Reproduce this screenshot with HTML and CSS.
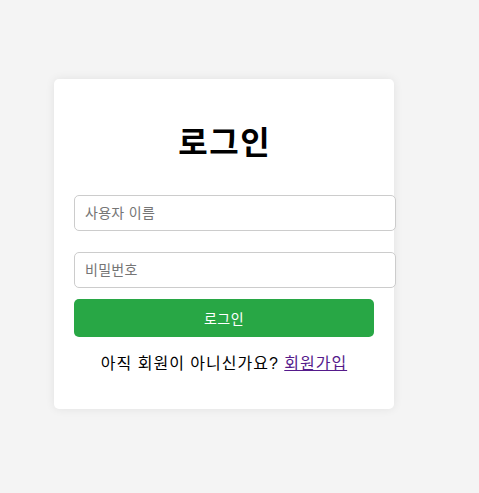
FILE: index.html
```html
<!DOCTYPE html>
<html lang="ko">
<head>
<meta charset="utf-8">
<link rel="stylesheet" href="styles.css">
</head>
<body>
<div class="card">
  <h1 class="title">로그인</h1>
  <form class="form">
    <input class="field" type="text" placeholder="사용자 이름">
    <input class="field second" type="password" placeholder="비밀번호">
    <button class="btn" type="button">로그인</button>
  </form>
  <p class="signup">아직 회원이 아니신가요? <a class="link" href="#">회원가입</a></p>
</div>
</body>
</html>
```
FILE: styles.css
```css
html, body {
  margin: 0;
  padding: 0;
}
body {
  background: #f4f4f4;
  font-family: "Liberation Sans", "Noto Sans CJK KR", sans-serif;
  width: 479px;
  height: 493px;
  padding-top: 79px;
  padding-left: 54px;
  box-sizing: border-box;
}
.card {
  width: 300px;
  padding: 20px;
  background: #fff;
  border-radius: 5px;
  box-shadow: 0 0 10px rgba(0,0,0,0.08);
  height: 290px;
}
.title {
  margin: 24px 0 0;
  text-align: center;
  font-size: 32px;
  line-height: 40px;
  font-weight: bold;
  color: #000;
  letter-spacing: 1.5px;
  padding-left: 1.5px;
}
.form {
  display: flex;
  flex-direction: column;
  margin-top: 32px;
}
.field {
  width: 300px;
  height: 34px;
  padding: 0 10px;
  border: 1px solid #ccc;
  border-radius: 5px;
  font-size: 14px;
  font-family: "Liberation Sans", "Noto Sans CJK KR", sans-serif;
  box-sizing: content-box;
  margin: 0;
  outline: none;
  letter-spacing: 0.3px;
}
.field::placeholder {
  color: #757575;
}
.second {
  margin-top: 21px;
}
.btn {
  margin-top: 11px;
  width: 300px;
  height: 38px;
  border: none;
  border-radius: 5px;
  background: #28a745;
  color: #fff;
  font-size: 14px;
  font-family: "Liberation Sans", "Noto Sans CJK KR", sans-serif;
  padding: 0;
  letter-spacing: 0.5px;
}
.signup {
  margin: 16px 0 0;
  text-align: center;
  font-size: 16px;
  line-height: 22px;
  color: #000;
  letter-spacing: 1px;
}
.link {
  color: #551a8b;
}
```
